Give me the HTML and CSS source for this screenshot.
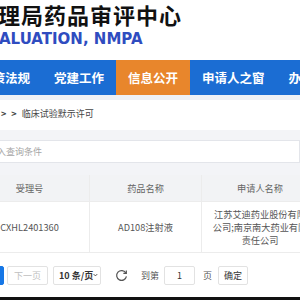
FILE: index.html
```html
<!DOCTYPE html>
<html lang="zh-CN">
<head>
    <meta charset="UTF-8">
    <title>临床试验默示许可</title>
    <link rel="stylesheet" href="styles.css">
</head>
<body>
    <div class="page">
        <header class="top">
            <h1 class="title">理局药品审评中心</h1>
            <p class="subtitle">ALUATION, NMPA</p>
        </header>
        <nav class="menu">
            <div class="menu-list">
                <a class="menu-item">政策法规</a>
                <span class="sep"></span>
                <a class="menu-item">党建工作</a>
                <span class="sep"></span>
                <a class="menu-item active">信息公开</a>
                <span class="sep"></span>
                <a class="menu-item">申请人之窗</a>
                <span class="sep"></span>
                <a class="menu-item">办事服务</a>
            </div>
        </nav>
        <div class="strip"></div>
        <div class="crumbs"><span class="arrow">&gt;</span><span class="arrow">&gt;</span>临床试验默示许可</div>
        <div class="search">
            <div class="search-box">请输入查询条件</div>
        </div>
        <div class="table">
            <div class="cell head">受理号</div>
            <div class="cell head">药品名称</div>
            <div class="cell head">申请人名称</div>
            <div class="cell">CXHL2401360</div>
            <div class="cell">AD108注射液</div>
            <div class="cell">江苏艾迪药业股份有限公司;南京南大药业有限责任公司</div>
        </div>
        <div class="pager">
            <button class="pg-btn current">1</button>
            <button class="pg-btn next" disabled>下一页</button>
            <div class="pg-size">10 条/页
                <svg width="8" height="6" viewBox="0 0 8 6"><path d="M1 1.5 L4 4.5 L7 1.5" fill="none" stroke="#333" stroke-width="1.4"/></svg>
            </div>
            <svg class="refresh" width="13" height="13" viewBox="0 0 14 14">
                <path d="M11.6 4.2 A5.3 5.3 0 1 0 12.3 8" fill="none" stroke="#555" stroke-width="1.3"/>
                <path d="M12.2 1.6 L12.2 4.8 L9 4.8" fill="none" stroke="#555" stroke-width="1.3"/>
            </svg>
            <span class="pg-text">到第</span>
            <div class="pg-input">1</div>
            <span class="pg-text">页</span>
            <button class="pg-btn ok">确定</button>
        </div>
        <div class="taskbar"></div>
    </div>
</body>
</html>
```
FILE: styles.css
```css
body {
    margin: 0;
    background: #ffffff;
    font-family: "Noto Sans CJK SC", "Noto Sans", sans-serif;
}
.page {
    width: 300px;
    height: 300px;
    overflow: hidden;
}
.top {
    height: 60px;
    background: #ffffff;
}
.title {
    margin: 0 0 0 -2px;
    font-size: 22px;
    line-height: 28px;
    font-weight: 700;
    letter-spacing: 1px;
    color: #111111;
    white-space: nowrap;
}
.subtitle {
    margin: 3px 0 0 -1px;
    font-family: "DejaVu Sans", sans-serif;
    font-size: 15px;
    line-height: 16px;
    font-weight: 700;
    color: #2f4cc0;
    white-space: nowrap;
}
.menu {
    height: 35px;
    background: #1b6dd3;
}
.menu-list {
    display: flex;
    align-items: center;
    height: 100%;
    margin-left: -32px;
    white-space: nowrap;
}
.menu-item {
    display: flex;
    align-items: center;
    height: 100%;
    padding: 0 12px;
    font-size: 12.5px;
    font-weight: 700;
    color: #ffffff;
}
.menu-item.active {
    background: #e8862c;
}
.sep {
    width: 1px;
    height: 18px;
    background: rgba(255, 255, 255, 0.35);
}
.strip {
    height: 5px;
    background: #eef1f6;
}
.crumbs {
    height: 30px;
    line-height: 27px;
    padding-left: 1px;
    font-size: 9px;
    color: #444444;
    background: #ffffff;
    border-bottom: 10px solid #f3f4f7;
    white-space: nowrap;
}
.arrow {
    margin-right: 5px;
    font-weight: 700;
}
.search {
    background: #f3f4f7;
    padding-bottom: 12px;
}
.search-box {
    height: 21px;
    line-height: 21px;
    margin-left: -30px;
    padding-left: 8px;
    font-size: 9px;
    color: #a5a5a5;
    background: #ffffff;
    border: 1px solid #e3e5ea;
}
.table {
    display: grid;
    grid-template-columns: 120px 112px 117px;
    margin-left: -30px;
    font-size: 9.2px;
    color: #555555;
}
.cell {
    display: flex;
    align-items: center;
    justify-content: center;
    text-align: center;
    padding: 4px 10px;
    border-right: 1px solid #ececec;
    border-bottom: 1px solid #ececec;
    line-height: 13px;
    height: 42px;
}
.cell.head {
    height: 18px;
    background: #f2f3f5;
    color: #666666;
}
.pager {
    display: flex;
    align-items: center;
    height: 44px;
    margin-left: -18px;
    font-size: 9px;
    color: #555555;
    white-space: nowrap;
}
.pg-btn {
    height: 19px;
    padding: 0;
    font-family: inherit;
    font-size: 9px;
    color: #333333;
    background: #ffffff;
    border: 1px solid #e2e2e2;
    border-radius: 2px;
}
.pg-btn.current {
    width: 22px;
    color: #ffffff;
    background: #1677e6;
    border-color: #1677e6;
}
.pg-btn.next {
    width: 41px;
    margin-left: 3px;
    color: #c0c0c0;
}
.pg-size {
    display: flex;
    align-items: center;
    justify-content: space-between;
    width: 48px;
    height: 19px;
    box-sizing: border-box;
    margin-left: 5px;
    padding: 0 2px 0 5px;
    font-weight: 700;
    color: #333333;
    border: 1px solid #e2e2e2;
    border-radius: 2px;
}
.refresh {
    margin-left: 14px;
}
.pg-text {
    margin-left: 13px;
}
.pg-input {
    width: 31px;
    height: 19px;
    box-sizing: border-box;
    margin-left: 5px;
    line-height: 17px;
    text-align: center;
    color: #333333;
    border: 1px solid #e2e2e2;
    border-radius: 2px;
}
.pg-input + .pg-text {
    margin-left: 8px;
}
.pg-btn.ok {
    width: 30px;
    margin-left: 6px;
}
.taskbar {
    height: 10px;
    background: #111111;
}
```
